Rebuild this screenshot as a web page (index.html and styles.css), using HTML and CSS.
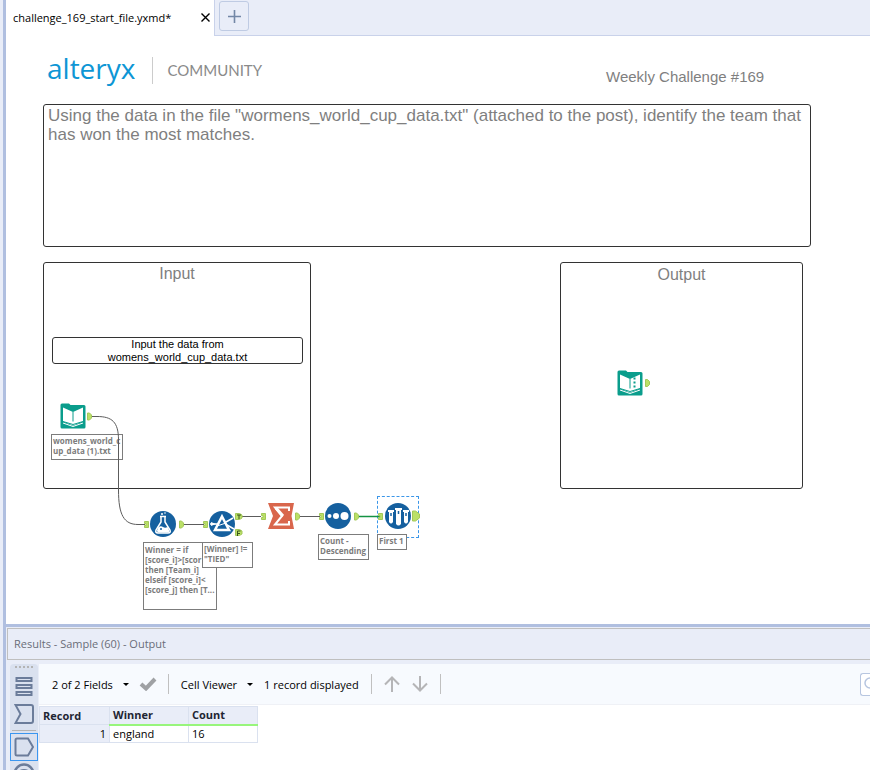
FILE: index.html
```html
<!DOCTYPE html>
<html lang="en">
<head>
  <meta charset="UTF-8">
  <title>challenge_169_start_file.yxmd*</title>
  <link rel="stylesheet" href="styles.css">
</head>
<body>

  <div class="gutter"></div>

  <div class="main">
    <nav class="tabs">
      <div class="tab">
        <span>challenge_169_start_file.yxmd*</span>
        <button class="tab-close" aria-label="Close tab">
          <svg width="9" height="9" viewBox="0 0 9 9"><path d="M0.5 0.5L8.5 8.5M8.5 0.5L0.5 8.5" stroke="#000" stroke-width="1.4"/></svg>
        </button>
      </div>
      <div class="tabs-rest">
        <button class="tab-add" aria-label="New workflow">
          <svg width="13" height="13" viewBox="0 0 13 13"><path d="M6.5 0V13M0 6.5H13" stroke="#7387a6" stroke-width="1.6"/></svg>
        </button>
      </div>
    </nav>

    <main class="canvas">
      <div class="brand">
        <span class="logo">alteryx</span>
        <span class="community">COMMUNITY</span>
      </div>
      <div class="challenge">Weekly Challenge #169</div>

      <!-- comment boxes -->
      <div class="box box-task">Using the data in the file "wormens_world_cup_data.txt" (attached to the post), identify the team that has won the most matches.</div>
      <div class="box box-input">Input</div>
      <div class="box box-output">Output</div>
      <div class="box box-note">Input the data from womens_world_cup_data.txt</div>

      <!-- annotations -->
      <div class="note note-file">womens_world_c<br>up_data (1).txt</div>
      <div class="note note-formula">Winner = if<br>[score_i]&gt;[scor<br>then [Team_i]<br>elseif [score_i]&lt;<br>[score_j] then [T...</div>
      <div class="note note-filter">[Winner] !=<br>"TIED"</div>
      <div class="note note-sort">Count -<br>Descending</div>
      <div class="selection"></div>
      <div class="note note-sample">First 1</div>

      <!-- connections and anchors -->
      <svg class="wires" width="700" height="580" viewBox="6 36 700 580">
        <g fill="none" stroke="#5c5c5c" stroke-width="1">
          <path d="M91 416.500H97C112 416.500 118.500 422 118.500 440V490C118.500 515 124 524.500 138 524.500H145"/>
          <path d="M183 524.500H204M242 516.500H261M299 516.500H320"/>
        </g>
        <path d="M359 516.500H381" stroke="#149344" stroke-width="1.500"/>
        <g fill="#bbe067" stroke="#a3c85a" stroke-width="1">
          <path d="M144.500 521.500h4v6h-4v-2h1.500v-2h-1.500z"/>
          <path d="M203.500 521.500h4v6h-4v-2h1.500v-2h-1.500z"/>
          <path d="M261.500 513.500h4v6h-4v-2h1.500v-2h-1.500z"/>
          <path d="M319.500 513.500h4v6h-4v-2h1.500v-2h-1.500z"/>
          <path d="M378.500 513.500h4v6h-4v-2h1.500v-2h-1.500z"/>
          <path d="M87.500 413h2l2 2v3l-2 2h-2z"/>
          <path d="M645.500 379.500h2l2 2v3l-2 2h-2z"/>
          <path d="M179.500 521h2l2 2v3l-2 2h-2z"/>
          <path d="M295.500 513h2l2 2v3l-2 2h-2z"/>
          <path d="M354.500 513h2l2 2v3l-2 2h-2z"/>
          <path d="M412.500 511h3l4 3v4l-4 3h-3z"/>
          <path d="M235.500 513.500h4l2.500 1.500v3l-2.500 1.500h-4z"/>
          <path d="M235.500 529.500h4l2.500 1.500v3l-2.500 1.500h-4z"/>
        </g>
        <path d="M237 515h4M239 515v4M237.500 536v-5h3M237.500 533.500h2.500" fill="none" stroke="#38551c"/>
      </svg>

      <!-- tools -->
      <svg class="tool tool-text" viewBox="0 0 26 26">
        <path d="M.5 2Q.5 .500 2 .500H9L10.500 2H24Q25.500 2 25.500 3.500V24Q25.500 25.500 24 25.500H2Q.5 25.500 .5 24z" fill="#0a9d8c"/>
        <path d="M3 4.500L13 9L23 4.500V18.500L13 22.500L3 18.500z" fill="#fff"/>
        <path d="M13 9V18.500" stroke="#0a9d8c" stroke-width="1"/>
        <path d="M3 20L13 23.500L23 20" fill="none" stroke="#fff" stroke-width="1"/>
        <path d="M3 18.500L13 21.500L23 18.500" fill="none" stroke="#0a9d8c" stroke-width="1"/>
      </svg>
      <svg class="tool tool-out" viewBox="0 0 26 26">
        <path d="M.5 2Q.5 .500 2 .500H9L10.500 2H24Q25.500 2 25.500 3.500V24Q25.500 25.500 24 25.500H2Q.5 25.500 .5 24z" fill="#0a9d8c"/>
        <path d="M3 4.500L13 9L23 4.500V18.500L13 22.500L3 18.500z" fill="#fff"/>
        <path d="M13 9V18.500" stroke="#0a9d8c" stroke-width="1"/>
        <path d="M3 20L13 23.500L23 20" fill="none" stroke="#fff" stroke-width="1"/>
        <path d="M3 18.500L13 21.500L23 18.500" fill="none" stroke="#0a9d8c" stroke-width="1"/>
        <path d="M17.500 7.500v2M17.500 11.500v2M17.500 15.500v2" stroke="#0a9d8c" stroke-width="2"/>
      </svg>
      <svg class="tool tool-formula" viewBox="0 0 26 26">
        <circle cx="13" cy="13" r="13" fill="#15609f"/>
        <path d="M10 5.500H16M11 6V11L6 19Q5 22 8 22H18Q21 22 20 19L15 11V6" fill="none" stroke="#fff" stroke-width="1.500"/>
        <path d="M8.500 16Q11 14.500 13 16T17.500 16L19.500 20Q19 21.500 17 21.500H9Q7 21.500 7 19.500z" fill="#fff"/>
        <circle cx="12" cy="3" r="1" fill="#fff"/><circle cx="15" cy="2" r=".8" fill="#fff"/><circle cx="11" cy="18" r="1" fill="#15609f"/>
      </svg>
      <svg class="tool tool-filter" viewBox="0 0 26 26">
        <circle cx="13" cy="13" r="13" fill="#15609f"/>
        <path d="M1 13H9M17 11L24 7M18 14L25 18" stroke="#fff" stroke-width="1.500"/>
        <path d="M2 11L7 13L2 15z" fill="#fff"/>
        <path d="M13 5.500L20 19H6z" fill="#15609f" stroke="#fff" stroke-width="2.500"/>
        <path d="M8 15L17 12" stroke="#fff"/>
      </svg>
      <svg class="tool tool-sum" viewBox="0 0 26 26">
        <path d="M0 0H26L23.500 13L26 26H0L5 13z" fill="#d9664c"/>
        <path d="M21 8V4.500H7L14 13L7 21.500H21V18" fill="none" stroke="#fff" stroke-width="2"/>
        <path d="M8 5L15 13" stroke="#fff" stroke-width="3"/>
      </svg>
      <svg class="tool tool-sort" viewBox="0 0 26 26">
        <circle cx="13" cy="13" r="13" fill="#15609f"/>
        <circle cx="4.500" cy="13" r="2" fill="#fff"/><circle cx="11" cy="13" r="3" fill="#fff"/><circle cx="19.500" cy="13" r="4" fill="#fff"/>
      </svg>
      <svg class="tool tool-sample" viewBox="0 0 26 26">
        <circle cx="13" cy="13" r="13" fill="#15609f"/>
        <g fill="#fff">
          <path d="M3 7h6v2h-1v10q-2 3-4 0V9H3z"/>
          <path d="M10 5h7v2h-1v14q-2.500 3-5 0V7h-1z"/>
          <path d="M18 7h6v2h-1v10q-2 3-4 0V9h-1z"/>
        </g>
        <path d="M6 10v3M13.500 8v3M21 10v3" stroke="#15609f" stroke-width="1.500"/>
      </svg>
    </main>

    <section class="results">
      <h2 class="results-title">Results - Sample (60) - Output</h2>
      <div class="results-body">
        <div class="side">
          <div class="grip"></div>
          <button aria-label="Messages">
            <svg width="20" height="20" viewBox="0 0 20 20" fill="none" stroke="#6b7c9a" stroke-width="2"><path d="M2.500 2h15v3h-15zM2.500 9h15v3h-15zM2.500 16h15v3h-15z"/></svg>
          </button>
          <button aria-label="Input anchor">
            <svg width="20" height="20" viewBox="0 0 20 20" fill="none" stroke="#6b7c9a" stroke-width="2"><path d="M1.500 1H17Q19 1 19 3V17Q19 19 17 19H1.500L6.500 10z"/></svg>
          </button>
          <div class="side-line"></div>
          <button class="active" aria-label="Output anchor">
            <svg width="20" height="20" viewBox="0 0 20 20" fill="none" stroke="#6b7c9a" stroke-width="2"><path d="M3 1.500H14L19 10L14 18.500H3Q1.500 18.500 1.500 17V3Q1.500 1.500 3 1.500z"/></svg>
          </button>
          <button aria-label="Browse">
            <svg width="22" height="24" viewBox="0 0 22 24" fill="none" stroke="#6b7c9a" stroke-width="2.500"><circle cx="11" cy="11" r="9.500"/><path d="M5 9.500Q11 5 17 9.500"/></svg>
          </button>
        </div>

        <div class="data">
          <div class="toolbar">
            <button class="drop">2 of 2 Fields <i class="caret"></i></button>
            <svg class="check" width="18" height="14" viewBox="0 0 18 14"><path d="M2 7L7 11.500L16 2" fill="none" stroke="#9fa1a4" stroke-width="4"/></svg>
            <i class="sep"></i>
            <button class="drop">Cell Viewer <i class="caret"></i></button>
            <span class="count">1 record displayed</span>
            <i class="sep"></i>
            <button class="arrow" aria-label="Previous"><svg width="16" height="16" viewBox="0 0 16 16"><path d="M8 16V1.500M1 8.500L8 1.500L15 8.500" fill="none" stroke="#b5b5b7" stroke-width="2"/></svg></button>
            <button class="arrow" aria-label="Next"><svg width="16" height="16" viewBox="0 0 16 16"><path d="M8 0V14.500M1 7.500L8 14.500L15 7.500" fill="none" stroke="#b5b5b7" stroke-width="2"/></svg></button>
            <i class="sep"></i>
            <button class="search" aria-label="Search"><svg width="14" height="14" viewBox="0 0 14 14"><circle cx="6" cy="6" r="5" fill="none" stroke="#b7c6e0" stroke-width="1.500"/></svg></button>
          </div>
          <table class="grid">
            <thead>
              <tr><th>Record</th><th class="ok">Winner</th><th class="ok">Count</th></tr>
            </thead>
            <tbody>
              <tr><td class="num">1</td><td>england</td><td>16</td></tr>
            </tbody>
          </table>
        </div>
      </div>
    </section>
  </div>

</body>
</html>
```
FILE: styles.css
```css
* {
  box-sizing: border-box;
}

body {
  margin: 0;
  height: 100vh;
  display: flex;
  overflow: hidden;
  background: #fff;
  font-family: "Open Sans", "Noto Sans", sans-serif;
  font-size: 11px;
  color: #000;
}

button {
  border: none;
  background: none;
  padding: 0;
  font: inherit;
  color: inherit;
}

svg {
  display: block;
}

.gutter {
  flex: none;
  width: 6px;
  background: #e9edf8;
  border-right: 3px solid #b0bfe0;
}

.main {
  flex: 1;
  min-width: 0;
  display: flex;
  flex-direction: column;
}

/* tabs */
.tabs {
  display: flex;
  height: 36px;
}

.tab {
  display: flex;
  align-items: center;
  justify-content: space-between;
  width: 208px;
  padding: 0 4px 2px 7px;
}

.tabs-rest {
  flex: 1;
  padding: 1px 4px;
  background: #e9edf8;
  border-left: 1px solid #c9d2ea;
  border-bottom: 1px solid #c9d2ea;
}

.tab-add {
  display: flex;
  align-items: center;
  justify-content: center;
  width: 30px;
  height: 30px;
  border: 1px solid #bfcbe3;
  border-radius: 3px;
}

/* workflow canvas */
.canvas {
  flex: 1;
  min-height: 0;
  position: relative;
  overflow: hidden;
  font-family: "Liberation Sans", Arial, sans-serif;
}

.brand {
  position: absolute;
  left: 41px;
  top: 14px;
  display: flex;
  align-items: center;
  font-family: Lato, sans-serif;
}

.logo {
  padding-bottom: 4px;
  font-family: "Open Sans", sans-serif;
  font-size: 28px;
  line-height: 36px;
  font-weight: 500;
  color: #0d96d5;
}

.community {
  margin-left: 17px;
  padding-left: 14px;
  border-left: 1px solid #ccc;
  font-size: 15px;
  line-height: 27px;
  color: #8a8a8a;
}

.challenge {
  position: absolute;
  left: 600px;
  top: 32px;
  font-size: 15px;
  line-height: 18px;
  color: #7f7f7f;
}

.box {
  position: absolute;
  border: 1px solid #333;
  border-radius: 3px;
  font-size: 16px;
  line-height: 20px;
  color: #7f7f7f;
  text-align: center;
}

.box-task {
  left: 37px;
  top: 68px;
  width: 768px;
  height: 143px;
  padding: 1px 4px;
  font-size: 17px;
  line-height: 19px;
  text-align: left;
}

.box-input {
  left: 37px;
  top: 226px;
  width: 268px;
  height: 227px;
  padding-top: 1px;
}

.box-output {
  left: 554px;
  top: 226px;
  width: 243px;
  height: 227px;
  padding-top: 2px;
}

.box-note {
  left: 46px;
  top: 301px;
  width: 251px;
  height: 27px;
  padding: 0 50px;
  overflow: hidden;
  font-size: 11px;
  line-height: 13px;
  color: #000;
}

.note {
  position: absolute;
  border: 1px solid #7c7c7c;
  background: #fff;
  padding: 1px;
  overflow: hidden;
  font-family: "Open Sans", sans-serif;
  font-size: 8px;
  line-height: 10px;
  font-weight: 700;
  color: #7c7c7c;
  white-space: nowrap;
}

.note-file {
  left: 45px;
  top: 398px;
  width: 72px;
  height: 26px;
}

.note-formula {
  left: 137px;
  top: 506px;
  width: 74px;
  height: 68px;
  padding-top: 2px;
}

.note-filter {
  left: 196px;
  top: 506px;
  width: 51px;
  height: 26px;
}

.note-sort {
  left: 312px;
  top: 498px;
  width: 51px;
  height: 26px;
}

.note-sample {
  left: 371px;
  top: 498px;
  width: 30px;
  height: 16px;
}

.selection {
  position: absolute;
  left: 371px;
  top: 460px;
  width: 42px;
  height: 42px;
  border: 1px dashed #3b96e8;
}

.wires {
  position: absolute;
  left: 0;
  top: 0;
}

.tool {
  position: absolute;
  width: 26px;
  height: 26px;
}

.tool-text { left: 54px; top: 367px; }
.tool-out { left: 611px; top: 334px; }
.tool-formula { left: 144px; top: 475px; }
.tool-filter { left: 203px; top: 475px; }
.tool-sum { left: 262px; top: 467px; }
.tool-sort { left: 319px; top: 467px; }
.tool-sample { left: 379px; top: 467px; }

/* results window */
.results {
  flex: none;
  height: 146px;
  overflow: hidden;
  border-top: 3px solid #b0bfe0;
  background: #e9edf8;
}

.results-title {
  margin: 1px 0 0 1px;
  height: 32px;
  padding-left: 6px;
  border: 1px solid #bfbfbf;
  border-right: none;
  font-size: 11px;
  line-height: 30px;
  font-weight: 400;
  color: #6a6e78;
}

.results-body {
  display: flex;
  padding: 4px 0 0 4px;
}

.side {
  flex: none;
  display: flex;
  flex-direction: column;
  align-items: center;
  width: 28px;
  background: #dae1ef;
  border-radius: 4px 4px 0 0;
}

.side button {
  display: flex;
  flex: none;
  align-items: center;
  justify-content: center;
  width: 28px;
  height: 28px;
}

.side .active {
  border: 1px solid #3b96f0;
}

.grip {
  width: 19px;
  height: 2px;
  margin: 2px 0 4px;
  background: repeating-linear-gradient(to right, #b4b4b4 0 2px, transparent 2px 4px);
}

.side-line {
  width: 24px;
  height: 1px;
  margin: 2px 0;
  background: #b4b4b4;
}

.data {
  flex: 1;
  height: 120px;
  margin-left: 1px;
  background: #fff;
}

.toolbar {
  display: flex;
  align-items: center;
  height: 41px;
  padding-left: 13px;
  background: #f7fafe;
  border-bottom: 1px solid #eff1f6;
  white-space: nowrap;
}

.drop {
  display: flex;
  align-items: center;
  gap: 10px;
}

.caret {
  border: 3px solid transparent;
  border-top-color: #000;
  border-bottom: none;
}

.check {
  margin: 0 11px 0 10px;
}

.sep {
  width: 1px;
  height: 20px;
  margin-right: 12px;
  background: #c0c0c0;
}

.count {
  margin: 0 12px 0 11px;
}

.arrow {
  margin-right: 12px;
}

.arrow + .sep {
  margin-right: 0;
}

.search {
  width: 10px;
  height: 23px;
  margin-left: auto;
  padding-left: 3px;
  overflow: hidden;
  border: 1px solid #b7c6e0;
  border-right: none;
  border-radius: 3px 0 0 3px;
  background: #fff;
}

.grid {
  width: 219px;
  margin-top: 1px;
  table-layout: fixed;
  border-collapse: collapse;
  line-height: 16px;
}

.grid th,
.grid td {
  height: 18px;
  padding: 0 3px;
  border: 1px solid #dae1ef;
  text-align: left;
}

.grid th {
  background: #e9edf8;
  color: #1e2533;
  font-weight: 700;
}

.grid th:first-child {
  width: 70px;
}

.grid th:nth-child(2) {
  width: 79px;
}

.grid .ok {
  border-bottom: 2px solid #98f57c;
}

.grid .num {
  background: #e9edf8;
  text-align: right;
}
```
